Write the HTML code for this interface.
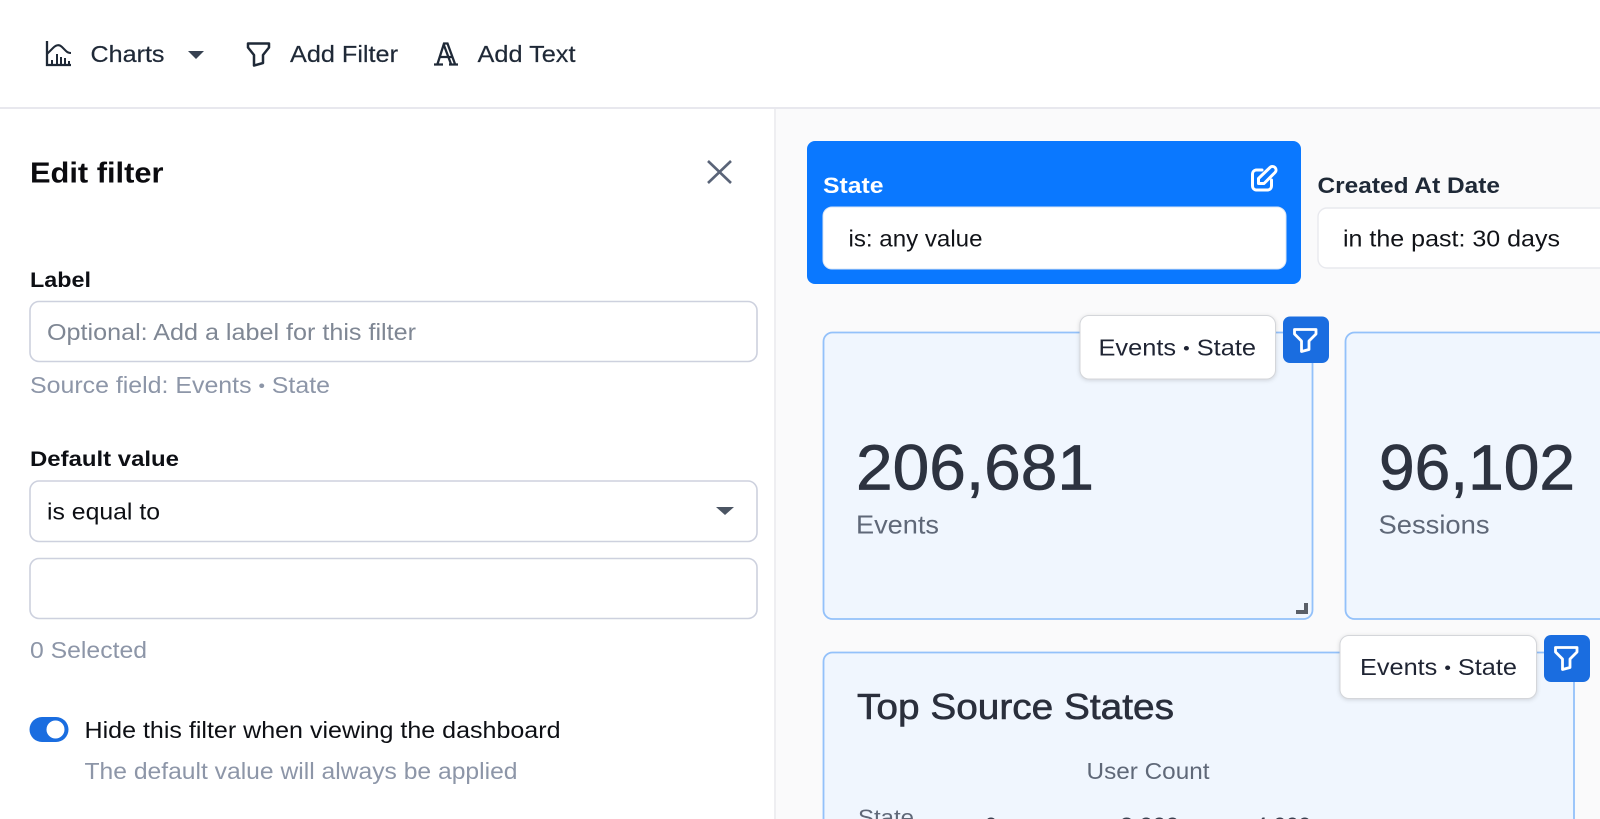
<!DOCTYPE html>
<html lang="en"><head><meta charset="utf-8"><title>Edit filter</title>
<style>
html,body{margin:0;padding:0;background:#fff;width:1600px;height:819px;overflow:hidden}
svg{display:block}
text{font-family:"Liberation Sans",sans-serif;white-space:pre}
.b{font-weight:700}
.s{filter:drop-shadow(0 1px 2px rgba(0,0,0,.14))}
</style></head><body>
<svg width="1600" height="819" viewBox="0 0 1600 819" xmlns="http://www.w3.org/2000/svg">
<rect width="1600" height="819" fill="#fff"/>
<rect x="775" y="108" width="825" height="711" fill="#fafafb"/>
<rect x="774" y="108" width="2" height="711" fill="#eeeef1"/>
<rect x="0" y="107" width="1600" height="2" fill="#e8e8ee"/>

<!-- toolbar -->
<g fill="none" stroke="#1f2937" stroke-width="2.300">
<path d="M47 41V65H71"/>
<path d="M47 54L53 48Q58 43 62 47L66 51Q68 53 71 53" stroke-width="2"/>
<path d="M52 65V60M57 65V54M61 65V57M65 65V58M69 65V61" stroke-width="2"/>
<path d="M248 43.500H269V47.500L263 55V63L254 65.500V55L248 47.500Z" stroke-width="2.500" stroke-linejoin="round"/>
<path d="M434 64.500H443M449 64.500H458M437.500 64L444 43.500H447.500L455 64M443.500 44L451 64M440 57H452" stroke-width="2.300"/>
</g>
<path d="M188 51H204L196 59Z" fill="#374151"/>
<g font-size="23.500" fill="#1f2937" stroke="#1f2937" stroke-width=".2">
<text x="90.500" y="62" textLength="74" lengthAdjust="spacingAndGlyphs">Charts</text>
<text x="290" y="62" textLength="108" lengthAdjust="spacingAndGlyphs">Add Filter</text>
<text x="477.500" y="62" textLength="98" lengthAdjust="spacingAndGlyphs">Add Text</text>
</g>

<!-- sidebar -->
<text class="b" x="30" y="182.500" font-size="29" fill="#0b0b0f" textLength="133.500" lengthAdjust="spacingAndGlyphs">Edit filter</text>
<path d="M708 161L731 183M731 161L708 183" stroke="#5a6478" stroke-width="2.600" fill="none"/>

<text class="b" x="30" y="287" font-size="21.500" fill="#0d0f14" textLength="61" lengthAdjust="spacingAndGlyphs">Label</text>
<rect x="30" y="301.500" width="727" height="60" rx="9" fill="#fff" stroke="#cdd1de" stroke-width="1.600"/>
<text x="47" y="340" font-size="23" fill="#7f8794" textLength="369" lengthAdjust="spacingAndGlyphs">Optional: Add a label for this filter</text>
<text x="30" y="393" font-size="23" fill="#8d96a8" textLength="300" lengthAdjust="spacingAndGlyphs">Source field: Events <tspan font-size="17" dy="-1.500">•</tspan><tspan dy="1.500"> State</tspan></text>

<text class="b" x="30" y="466" font-size="21.500" fill="#0d0f14" textLength="149" lengthAdjust="spacingAndGlyphs">Default value</text>
<rect x="30" y="481" width="727" height="60.500" rx="9" fill="#fff" stroke="#cdd1de" stroke-width="1.600"/>
<text x="47" y="519.500" font-size="23" fill="#0d0f14" textLength="113" lengthAdjust="spacingAndGlyphs">is equal to</text>
<path d="M716 507H734L725 515Z" fill="#4b5563"/>
<rect x="30" y="558.500" width="727" height="60" rx="9" fill="#fff" stroke="#cdd1de" stroke-width="1.600"/>
<text x="30" y="658" font-size="23" fill="#8d96a8" textLength="117" lengthAdjust="spacingAndGlyphs">0 Selected</text>

<rect x="29.500" y="717" width="39" height="25" rx="12.500" fill="#1a6de0"/>
<circle cx="55.500" cy="729.500" r="9" fill="#fff"/>
<text x="84.500" y="738" font-size="23" fill="#0d0f14" textLength="476" lengthAdjust="spacingAndGlyphs">Hide this filter when viewing the dashboard</text>
<text x="84.500" y="779" font-size="23" fill="#8d96a8" textLength="433" lengthAdjust="spacingAndGlyphs">The default value will always be applied</text>

<!-- filter bar -->
<rect x="807" y="141" width="494" height="143" rx="8" fill="#0a78ff"/>
<text class="b" x="823" y="193" font-size="22" fill="#fff" textLength="60.500" lengthAdjust="spacingAndGlyphs">State</text>
<g fill="none" stroke="#fff" stroke-width="3" stroke-linejoin="round" stroke-linecap="round">
<path d="M1262 170H1256A4 4 0 0 0 1252.500 174V186A4 4 0 0 0 1256 190H1268A4 4 0 0 0 1271.500 186V180"/>
<path d="M1258.500 183.500V178.500L1270 167.500A3.200 3.200 0 0 1 1275 172.500L1264 183.500Z"/>
</g>
<rect x="823" y="207" width="463" height="62" rx="9" fill="#fff" stroke="#d8e4f5" stroke-width="1"/>
<text x="848.500" y="246.700" font-size="23" fill="#111318" textLength="134" lengthAdjust="spacingAndGlyphs">is: any value</text>

<text class="b" x="1317.500" y="193" font-size="22" fill="#1f2937" textLength="182.500" lengthAdjust="spacingAndGlyphs">Created At Date</text>
<path d="M1600 208H1327A9 9 0 0 0 1318 217V259A9 9 0 0 0 1327 268H1600" fill="#fff" stroke="#e8e9ee" stroke-width="1.400"/>
<text x="1343" y="246.700" font-size="23" fill="#111318" textLength="217" lengthAdjust="spacingAndGlyphs">in the past: 30 days</text>

<!-- card 1 -->
<rect x="823.500" y="332.500" width="489" height="286.500" rx="9" fill="#f0f6fe" stroke="#93c1fa" stroke-width="1.800"/>
<text x="856" y="489.500" font-size="64" fill="#2d3340" stroke="#2d3340" stroke-width=".7" textLength="238" lengthAdjust="spacingAndGlyphs">206,681</text>
<text x="856" y="533.500" font-size="26" fill="#5f6878" textLength="83" lengthAdjust="spacingAndGlyphs">Events</text>
<path d="M1296 612H1306V603" fill="none" stroke="#5a5f68" stroke-width="4"/>

<!-- card 2 -->
<path d="M1600 332.500H1354.500A9 9 0 0 0 1345.500 341.500V610A9 9 0 0 0 1354.500 619H1600" fill="#f0f6fe" stroke="#93c1fa" stroke-width="1.800"/>
<text x="1379" y="489.500" font-size="64" fill="#2d3340" stroke="#2d3340" stroke-width=".7" textLength="196" lengthAdjust="spacingAndGlyphs">96,102</text>
<text x="1378.500" y="533.500" font-size="26" fill="#5f6878" textLength="111" lengthAdjust="spacingAndGlyphs">Sessions</text>

<!-- tooltip 1 -->
<rect class="s" x="1080" y="315.500" width="195.500" height="63.500" rx="9" fill="#fff" stroke="#d4d6da" stroke-width="1"/>
<text x="1098.500" y="355.700" font-size="23" fill="#1f2433" textLength="157.500" lengthAdjust="spacingAndGlyphs">Events <tspan font-size="17" dy="-1.500">•</tspan><tspan dy="1.500"> State</tspan></text>
<rect x="1283" y="316.500" width="46" height="46.500" rx="7" fill="#1a6de0"/>
<path d="M1294.500 329.500H1316V334L1309 341V349.500L1301.500 351.500V341L1294.500 334Z" fill="none" stroke="#fff" stroke-width="2.800" stroke-linejoin="round"/>

<!-- card 3 -->
<path d="M823.500 819V661.500A9 9 0 0 1 832.500 652.500H1565A9 9 0 0 1 1574 661.500V819" fill="#f0f6fe" stroke="#93c1fa" stroke-width="1.800"/>
<text x="857" y="719" font-size="36" fill="#2a2f3c" stroke="#2a2f3c" stroke-width=".6" textLength="317" lengthAdjust="spacingAndGlyphs">Top Source States</text>
<text x="1086.500" y="779" font-size="23" fill="#5f6878" textLength="123" lengthAdjust="spacingAndGlyphs">User Count</text>
<text x="858" y="825" font-size="22" fill="#5f6878" textLength="56" lengthAdjust="spacingAndGlyphs">State</text>
<g font-size="21" fill="#3a4150">
<text x="985" y="832" textLength="12" lengthAdjust="spacingAndGlyphs">0</text>
<text x="1120" y="832" textLength="59" lengthAdjust="spacingAndGlyphs">2,000</text>
<text x="1255" y="832" textLength="56" lengthAdjust="spacingAndGlyphs">4,000</text>
</g>

<!-- tooltip 2 -->
<rect class="s" x="1340" y="635.500" width="196.500" height="63" rx="9" fill="#fff" stroke="#d4d6da" stroke-width="1"/>
<text x="1360" y="675" font-size="23" fill="#1f2433" textLength="157" lengthAdjust="spacingAndGlyphs">Events <tspan font-size="17" dy="-1.500">•</tspan><tspan dy="1.500"> State</tspan></text>
<rect x="1544" y="635" width="46" height="47" rx="7" fill="#1a6de0"/>
<path d="M1555.500 647.500H1577V652L1570 659V667.500L1562.500 669.500V659L1555.500 652Z" fill="none" stroke="#fff" stroke-width="2.800" stroke-linejoin="round"/>
</svg>
</body></html>
